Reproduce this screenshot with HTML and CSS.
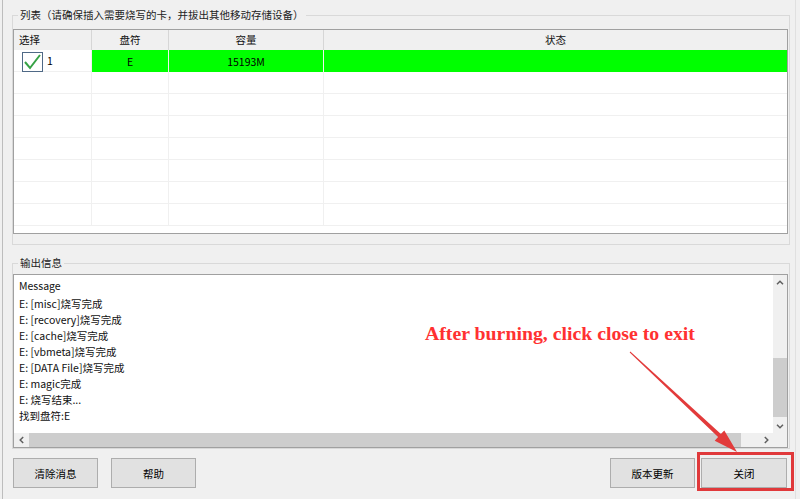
FILE: index.html
```html
<!DOCTYPE html>
<html lang="zh-CN">
<head>
<meta charset="utf-8">
<title>烧写工具</title>
<link rel="stylesheet" href="styles.css">
</head>
<body>
<div class="window">
  <div class="group list-group">
    <span class="group-title">列表（请确保插入需要烧写的卡，并拔出其他移动存储设备）</span>
    <div class="listview">
      <div class="lv-header">
        <div class="hcell left">选择</div>
        <div class="hcell">盘符</div>
        <div class="hcell">容量</div>
        <div class="hcell last">状态</div>
      </div>
      <div class="lv-body">
        <div class="row active">
          <div class="cell first">
            <span class="check"><svg width="19" height="18" viewBox="0 0 19 18"><path d="M2 9 L7 15 L17 2" fill="none" stroke="#36a245" stroke-width="2"/></svg></span>
            <span class="num">1</span>
          </div>
          <div class="cell green">E</div>
          <div class="cell green">15193M</div>
          <div class="cell green last"></div>
        </div>
        <div class="row"><div class="cell"></div><div class="cell"></div><div class="cell"></div><div class="cell last"></div></div>
        <div class="row"><div class="cell"></div><div class="cell"></div><div class="cell"></div><div class="cell last"></div></div>
        <div class="row"><div class="cell"></div><div class="cell"></div><div class="cell"></div><div class="cell last"></div></div>
        <div class="row"><div class="cell"></div><div class="cell"></div><div class="cell"></div><div class="cell last"></div></div>
        <div class="row"><div class="cell"></div><div class="cell"></div><div class="cell"></div><div class="cell last"></div></div>
        <div class="row"><div class="cell"></div><div class="cell"></div><div class="cell"></div><div class="cell last"></div></div>
        <div class="row"><div class="cell"></div><div class="cell"></div><div class="cell"></div><div class="cell last"></div></div>
      </div>
    </div>
  </div>

  <div class="group output-group">
    <span class="group-title">输出信息</span>
    <div class="msgbox">
      <div class="msg-text">
        <div class="msg-head">Message</div>
        <div>E: [misc]烧写完成</div>
        <div>E: [recovery]烧写完成</div>
        <div>E: [cache]烧写完成</div>
        <div>E: [vbmeta]烧写完成</div>
        <div>E: [DATA File]烧写完成</div>
        <div>E: magic完成</div>
        <div>E: 烧写结束...</div>
        <div>找到盘符:E</div>
      </div>
      <div class="vscroll">
        <div class="sb-btn"><svg width="8" height="5" viewBox="0 0 8 5"><path d="M1 4.2 L4 1.2 L7 4.2" fill="none" stroke="#606060" stroke-width="1.5"/></svg></div>
        <div class="vtrack"><div class="vthumb"></div></div>
        <div class="sb-btn"><svg width="8" height="5" viewBox="0 0 8 5"><path d="M1 0.8 L4 3.8 L7 0.8" fill="none" stroke="#606060" stroke-width="1.5"/></svg></div>
      </div>
      <div class="hscroll">
        <div class="sb-btn"><svg width="5" height="8" viewBox="0 0 5 8"><path d="M4.2 1 L1.2 4 L4.2 7" fill="none" stroke="#606060" stroke-width="1.5"/></svg></div>
        <div class="htrack"><div class="hthumb"></div></div>
        <div class="sb-btn"><svg width="5" height="8" viewBox="0 0 5 8"><path d="M0.8 1 L3.8 4 L0.8 7" fill="none" stroke="#606060" stroke-width="1.5"/></svg></div>
      </div>
      <div class="corner"></div>
    </div>
  </div>

  <div class="buttons">
    <div class="btn-group">
      <button class="btn">清除消息</button>
      <button class="btn">帮助</button>
    </div>
    <div class="btn-group right">
      <button class="btn">版本更新</button>
      <button class="btn close">关闭</button>
    </div>
  </div>
</div>

<div class="annotation-text">After burning, click close to exit</div>
<svg class="annotation-arrow" width="800" height="499" viewBox="0 0 800 499">
  <polygon points="630.3,351.6 720.9,434.1 724.3,430.5 737,452 714.7,440.7 718.1,437.1 629.7,352.4" fill="#e23b3b"/>
</svg>
<div class="highlight"></div>
</body>
</html>
```

FILE: styles.css
```css
html, body {
  margin: 0;
  padding: 0;
  background: #f0f0f0;
}

body {
  position: relative;
  width: 800px;
  height: 499px;
  overflow: hidden;
  font-family: "Noto Sans CJK SC", "Noto Sans", sans-serif;
  font-size: 10.5px;
  color: #000;
}

.window {
  margin-left: 2px;
  width: 794px;
  height: 499px;
  box-sizing: border-box;
  border-left: 1px solid #bdbdbd;
  border-right: 1px solid #e0e0e0;
  padding: 15px 0 0 9px;
}

.group {
  position: relative;
  width: 778px;
  box-sizing: border-box;
  border: 1px solid #d9d9d9;
}

.list-group {
  padding: 13px 1px 10px 0;
}

.output-group {
  margin-top: 18px;
  padding: 10px 1px 0 0;
}

.group-title {
  position: absolute;
  top: -8px;
  left: 5px;
  padding: 0 2px;
  line-height: 14px;
  background: #f0f0f0;
  color: #222;
  white-space: nowrap;
}

/* list view */
.listview {
  width: 775px;
  height: 205px;
  box-sizing: border-box;
  border: 1px solid #a0a0a0;
  background: #fff;
  overflow: hidden;
}

.lv-header,
.row {
  display: grid;
  grid-template-columns: 78px 77px 155px 463px;
}

.lv-header {
  height: 20px;
  background: #f0f0f0;
}

.hcell {
  border-right: 1px solid #d6d6d6;
  line-height: 20px;
  text-align: center;
  color: #111;
}

.hcell.left {
  text-align: left;
  padding-left: 5px;
}

.hcell.last,
.cell.last {
  border-right: none;
}

.row {
  height: 22px;
  box-sizing: border-box;
  border-bottom: 1px solid #f0f0f0;
}

.cell {
  border-right: 1px solid #f0f0f0;
  display: flex;
  align-items: center;
  justify-content: center;
}

.row.active .cell.green {
  background: #00ff00;
}

.cell.first {
  justify-content: flex-start;
  align-items: flex-start;
  padding-left: 8px;
}

.check {
  margin-top: 2px;
  width: 21px;
  height: 20px;
  box-sizing: border-box;
  border: 1px solid #4f6986;
  background: #fff;
  display: flex;
  align-items: center;
  justify-content: center;
}

.num {
  margin-left: 4px;
  line-height: 21px;
}

/* message box */
.msgbox {
  width: 775px;
  height: 174px;
  box-sizing: border-box;
  border: 1px solid #a0a0a0;
  background: #fff;
  display: grid;
  grid-template-columns: 1fr 14px;
  grid-template-rows: 1fr 14px;
}

.msg-text {
  padding: 3px 0 0 5px;
  line-height: 16px;
  overflow: hidden;
  white-space: nowrap;
  color: #111;
}

.msg-head {
  margin-bottom: 2px;
}

.vscroll {
  display: flex;
  flex-direction: column;
  background: #f0f0f0;
}

.sb-btn {
  flex: none;
  height: 14px;
  display: flex;
  align-items: center;
  justify-content: center;
}

.vtrack {
  flex: 1;
  display: flex;
  flex-direction: column;
  justify-content: flex-end;
}

.vthumb {
  height: 59px;
  margin-bottom: 2px;
  background: #cdcdcd;
}

.hscroll {
  display: flex;
  background: #f0f0f0;
}

.hscroll .sb-btn {
  width: 14px;
  height: auto;
}

.htrack {
  flex: 1;
}

.hthumb {
  margin-left: 1px;
  width: 712px;
  height: 100%;
  background: #cdcdcd;
}

.corner {
  background: #f0f0f0;
}

/* buttons */
.buttons {
  margin: 9px 0 0 1px;
  width: 774px;
  display: flex;
  justify-content: space-between;
}

.btn-group {
  display: flex;
  gap: 13px;
}

.btn-group.right {
  gap: 6px;
}

.btn {
  width: 85px;
  height: 30px;
  box-sizing: border-box;
  border: 1px solid #adadad;
  background: #e1e1e1;
  padding: 0;
  font-family: inherit;
  font-size: 10.5px;
  color: #000;
  display: flex;
  align-items: center;
  justify-content: center;
}

.btn.close {
  width: 86px;
}

/* annotation overlay */
.annotation-text {
  position: absolute;
  left: 425px;
  top: 321px;
  font-family: "Liberation Serif", serif;
  font-weight: bold;
  font-size: 19.8px;
  line-height: 24px;
  color: #ff3131;
  white-space: nowrap;
}

.annotation-arrow {
  position: absolute;
  left: 0;
  top: 0;
  pointer-events: none;
}

.highlight {
  position: absolute;
  left: 697px;
  top: 452px;
  width: 97px;
  height: 39px;
  box-sizing: border-box;
  border: 3px solid #e0393b;
}
```
